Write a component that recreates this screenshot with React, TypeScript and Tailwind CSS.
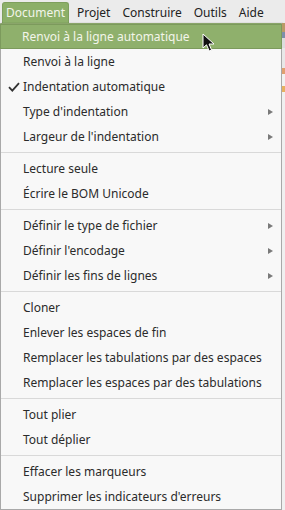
import React from "react";

type Item = { label: string; check?: boolean; sub?: boolean; active?: boolean };

const groups: Item[][] = [
  [
    { label: "Renvoi à la ligne automatique", active: true },
    { label: "Renvoi à la ligne" },
    { label: "Indentation automatique", check: true },
    { label: "Type d'indentation", sub: true },
    { label: "Largeur de l'indentation", sub: true },
  ],
  [{ label: "Lecture seule" }, { label: "Écrire le BOM Unicode" }],
  [
    { label: "Définir le type de fichier", sub: true },
    { label: "Définir l'encodage", sub: true },
    { label: "Définir les fins de lignes", sub: true },
  ],
  [
    { label: "Cloner" },
    { label: "Enlever les espaces de fin" },
    { label: "Remplacer les tabulations par des espaces" },
    { label: "Remplacer les espaces par des tabulations" },
  ],
  [{ label: "Tout plier" }, { label: "Tout déplier" }],
  [{ label: "Effacer les marqueurs" }, { label: "Supprimer les indicateurs d'erreurs" }],
];

function Row({ item }: { item: Item }) {
  return (
    <div
      className={
        item.active
          ? "relative flex items-center h-[25px] pl-[21px] pr-[6px] bg-[#8fb06c] border border-[#7c9a5c] -mx-px text-[#f3f5ea]"
          : "relative flex items-center h-[25px] pl-[22px] pr-[6px] text-[#2b2b2b]"
      }
    >
      {item.check && (
        <svg className="absolute left-[7px] top-[8px]" width="12" height="10" viewBox="0 0 12 10">
          <path d="M1 5.2 L4.3 8.6 L11 1.2" fill="none" stroke="#333" strokeWidth="1.8" />
        </svg>
      )}
      <span className="flex-1 whitespace-nowrap">{item.label}</span>
      {item.sub && (
        <svg width="5" height="6" viewBox="0 0 5 6" className="mr-[2px]">
          <path d="M0 0 L5 3 L0 6 Z" fill="#7a7a7a" />
        </svg>
      )}
    </div>
  );
}

export default function App() {
  return (
    <div
      className="w-[285px] h-[510px] overflow-hidden bg-[#ebebeb] text-[12px] relative"
      style={{ fontFamily: "'Noto Sans', 'Open Sans', sans-serif" }}
    >
      {/* menubar */}
      <div className="flex h-[23px] items-end text-[#222]">
        <div className="ml-[2px] h-[21px] w-[67px] flex items-center justify-center rounded-t-[3px] bg-[#8caf68] text-[#f3f5ea] border border-b-0 border-[#7e9f5d]">
          Document
        </div>
        <div className="h-[21px] flex items-center ml-[8px]">Projet</div>
        <div className="h-[21px] flex items-center ml-[12px]">Construire</div>
        <div className="h-[21px] flex items-center ml-[12px]">Outils</div>
        <div className="h-[21px] flex items-center ml-[12px]">Aide</div>
      </div>
      <div className="flex">
        {/* menu */}
        <div className="w-[282px] bg-[#f8f8f8] border border-[#a9a9a9] border-t-[#8aa56a] shadow-[1px_0_1px_rgba(0,0,0,0.25)]">
          {groups.map((g, gi) => (
            <div key={gi}>
              {gi > 0 && (
                <div className="h-[7px] flex items-center">
                  <div className="h-px w-full bg-[#d9d9d9]" />
                </div>
              )}
              {g.map((it) => (
                <Row key={it.label} item={it} />
              ))}
            </div>
          ))}
        </div>
        {/* background window strip */}
        <div className="flex-1 flex flex-col">
          <div className="h-[9px] bg-[#b99a66]" />
          <div className="h-[6px] bg-[#7d8fa8]" />
          <div className="h-[10px] bg-[#dcdcdc]" />
          <div className="h-[20px] bg-[#e8e8e8]" />
          <div className="h-[6px] bg-[#e0a070]" />
          <div className="h-[12px] bg-[#f2f2f2]" />
          <div className="h-[6px] bg-[#e6b060]" />
          <div className="flex-1 bg-[#f0f0f0]" />
        </div>
      </div>
      {/* mouse cursor */}
      <svg className="absolute left-[202px] top-[33px]" width="16" height="20" viewBox="0 0 16 20">
        <path
          d="M1 1 L1 15 L4.5 11.8 L7.2 18 L9.6 17 L7 11 L12 11 Z"
          fill="#111"
          stroke="#fff"
          strokeWidth="1"
          strokeLinejoin="round"
        />
      </svg>
    </div>
  );
}
